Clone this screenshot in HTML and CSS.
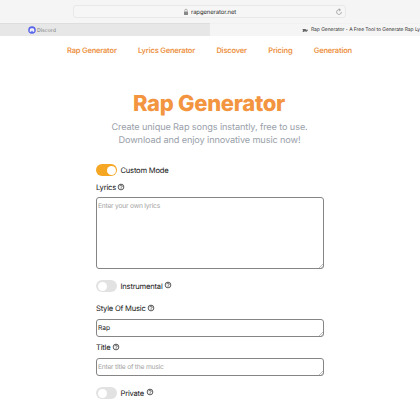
FILE: index.html
```
<!DOCTYPE html>
<html lang="en">
<head>
<meta charset="utf-8">
<title>Rap Generator</title>
<link rel="stylesheet" href="styles.css">
</head>
<body>
<svg width="0" height="0" class="defs"><defs>
<symbol id="help" viewBox="0 0 8 8"><circle cx="4" cy="4" r="2.85" fill="none" stroke="currentColor" stroke-width=".7"/><path d="M2.9 3.3a1.1 1.1 0 1 1 1.6.9C4.1 4.4 4 4.5 4 4.85M4 5.3v.65" fill="none" stroke="currentColor" stroke-width=".65"/></symbol>
</defs></svg>
<div class="toolbar">
  <div class="address">
    <svg class="lock" viewBox="0 0 6 8"><rect x="1" y="3.5" width="4" height="3.5" rx=".5" fill="#888"/><path d="M1.7 3.5V2.5a1.3 1.3 0 0 1 2.6 0v1" fill="none" stroke="#999" stroke-width=".7"/></svg>
    <span class="url">rapgenerator.net</span>
    <svg class="reload" viewBox="0 0 8 8"><path d="M5.3 2A2.4 2.4 0 1 0 6.4 4M3.8.6l1.6 1.3-1.5 1.3" fill="none" stroke="#777" stroke-width=".6"/></svg>
  </div>
</div>
<div class="tabs">
  <div class="tab inactive">
    <svg class="discord" viewBox="0 0 8 8"><circle cx="4" cy="4" r="3.8" fill="#5965e8"/><path d="M2.4 2.5Q4 2 5.6 2.5q.7 1.2.8 2.7-.7.5-1.3.6l-.3-.6H3.2l-.3.6q-.6-.1-1.3-.6.1-1.5.8-2.7z" fill="#fff"/><circle cx="3.1" cy="4.1" r=".45" fill="#5965e8"/><circle cx="4.9" cy="4.1" r=".45" fill="#5965e8"/></svg>
    <span class="discord-label">Discord</span>
  </div>
  <div class="tab active">
    <svg class="favicon" viewBox="0 0 6 5"><path d="M.4 1h3.2l.5.8H6v1H4.5l.7 1H4L3 3.2 1.5 3.9H.5l.6-1.2z" fill="#666"/></svg>
    <span class="tab-title">Rap Generator - A Free Tool to Generate Rap Ly</span>
  </div>
</div>
<nav class="nav">
  <a>Rap Generator</a><a>Lyrics Generator</a><a>Discover</a><a>Pricing</a><a>Generation</a>
</nav>
<main>
  <h1>Rap Generator</h1>
  <p class="intro">Create unique Rap songs instantly, free to use.<br>Download and enjoy innovative music now!</p>
  <form class="form">
    <div class="row custom"><span class="switch on"></span><span>Custom Mode</span></div>
    <div class="row lyrics"><span>Lyrics</span><svg class="help"><use href="#help"/></svg></div>
    <div class="field tall"><span class="placeholder">Enter your own lyrics</span><svg class="grip" viewBox="0 0 5 5"><path d="M0 5 5 0M2.8 5 5 2.8"/></svg></div>
    <div class="row instrumental"><span class="switch"></span><span>Instrumental</span><svg class="help raised"><use href="#help"/></svg></div>
    <div class="row style"><span>Style Of Music</span><svg class="help"><use href="#help"/></svg></div>
    <div class="field style-field"><span class="value">Rap</span><svg class="grip" viewBox="0 0 5 5"><path d="M0 5 5 0M2.8 5 5 2.8"/></svg></div>
    <div class="row title"><span>Title</span><svg class="help"><use href="#help"/></svg></div>
    <div class="field"><span class="placeholder">Enter title of the music</span><svg class="grip" viewBox="0 0 5 5"><path d="M0 5 5 0M2.8 5 5 2.8"/></svg></div>
    <div class="row private"><span class="switch"></span><span>Private</span><svg class="help raised"><use href="#help"/></svg></div>
  </form>
</main>
</body>
</html>
```
FILE: styles.css
```
* { box-sizing: border-box; }
body { margin: 0; width: 420px; height: 420px; overflow: hidden; background: #fff; color: #161616; font-family: Inter, "Liberation Sans", sans-serif; text-rendering: geometricPrecision; }
svg { display: block; flex: none; }
span, a { white-space: nowrap; }
.defs { position: absolute; }
.toolbar { height: 23px; padding: 5px 0 0 73px; background: #f5f5f5; }
.address { display: flex; align-items: center; width: 273px; height: 13px; padding: 0 2px 0 109px; border: 1px solid #e8e8e8; border-radius: 3px; background: #f6f6f6; font-size: 5.9px; line-height: 8px; color: #333; }
.url { padding-top: 2px; letter-spacing: -.08px; }
.lock { width: 6px; height: 8px; margin-right: 2px; }
.reload { width: 8px; height: 8px; margin-left: auto; }
.tabs { display: flex; height: 13px; font-size: 5px; }
.tab { display: flex; align-items: center; width: 210px; height: 13px; border-top: 1px solid #dedede; }
.inactive { padding-left: 27.5px; background: #e7e7e7; color: #777; }
.active { padding-left: 92px; border-top-color: #f1f1f1; background: #f5f5f5; color: #333; }
.discord { width: 8px; height: 8px; margin-right: 1.5px; }
.discord-label { padding-top: 1px; font-size: 5.2px; }
.tab-title { letter-spacing: -.07px; }
.favicon { width: 6px; height: 5px; margin-right: 3px; }
.nav { display: flex; height: 28px; padding: 0 68px 0 67px; align-items: center; justify-content: space-between; color: #ed9345; font-size: 7.5px; letter-spacing: -.19px; font-weight: 600; }
main { padding-top: 24px; }
h1 { width: 418px; margin: 0; height: 32px; line-height: 32px; text-align: center; font-size: 22px; letter-spacing: -.3px; font-weight: 800; color: #f39540; }
.intro { width: 419px; margin: 2px 0 0; text-align: center; font-size: 9.2px; letter-spacing: -.13px; line-height: 12.5px; color: #9aa1aa; }
.form { width: 228px; margin: 17px 0 0 96px; font-size: 7.6px; letter-spacing: -.21px; }
.row { display: flex; align-items: center; height: 12px; gap: 1.5px; }
.switch { display: flex; align-items: center; width: 21px; height: 12px; padding: 1.5px; margin-right: 2px; border-radius: 6px; background: #e2e2e2; flex: none; }
.switch::before { content: ""; width: 9px; height: 9px; border-radius: 50%; background: #fff; }
.on { justify-content: flex-end; background: #f5a623; }
.help { width: 8px; height: 8px; }
.raised { transform: translateY(-1px); }
.lyrics { margin-top: 5px; }
.instrumental { margin-top: 11px; }
.style { margin-top: 10px; }
.title { margin-top: 4px; }
.private { margin-top: 11px; }
.field { position: relative; width: 228px; height: 18px; margin-top: 5px; padding: 0 1px; border: 1px solid #858585; border-radius: 3px; line-height: 16px; font-size: 6.7px; letter-spacing: -.22px; }
.field span { display: block; }
.tall { height: 72px; margin-top: 4px; }
.value { letter-spacing: 0; }
.placeholder { color: #a3a3a3; }
.grip { position: absolute; right: 0; bottom: 0; width: 4px; height: 4px; fill: none; stroke: #888; stroke-width: .7; }
```
